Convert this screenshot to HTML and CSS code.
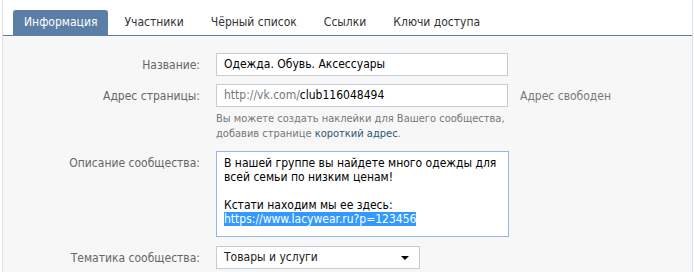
FILE: index.html
```html
<!DOCTYPE html>
<html>
<head>
  <meta charset="UTF-8">
  <title>Управление сообществом</title>
  <link rel="stylesheet" href="styles.css">
</head>
<body>

<div class="page">
  <!-- Вкладки -->
  <div class="tabs">
    <div class="tab active">Информация</div>
    <div class="tab">Участники</div>
    <div class="tab">Чёрный список</div>
    <div class="tab">Ссылки</div>
    <div class="tab">Ключи доступа</div>
  </div>

  <!-- Форма -->
  <div class="form">
    <div class="row">
      <div class="label">Название:</div>
      <div class="field">Одежда. Обувь. Аксессуары</div>
    </div>

    <div class="row">
      <div class="label">Адрес страницы:</div>
      <div class="field"><span class="prefix">http://vk.com/</span>club116048494</div>
      <div class="status">Адрес свободен</div>
    </div>
    <div class="hint">
      Вы можете создать наклейки для Вашего сообщества,<br>
      добавив странице <a href="#">короткий адрес</a>.
    </div>

    <div class="row top">
      <div class="label">Описание сообщества:</div>
      <div class="field area">В нашей группе вы найдете много одежды для
всей семьи по низким ценам!

Кстати находим мы ее здесь:
<span class="selected">https://www.lacywear.ru?p=123456</span></div>
    </div>

    <div class="row">
      <div class="label">Тематика сообщества:</div>
      <div class="field select">
        <span>Товары и услуги</span>
        <span class="arrow"></span>
      </div>
    </div>
  </div>
</div>

</body>
</html>
```

FILE: styles.css
```css
/* --- BASE --- */
* {
  margin: 0;
  padding: 0;
  box-sizing: border-box;
}
html, body {
  height: 100%;
  background: #fff;
  font-family: "DejaVu Sans Condensed", "DejaVu Sans", sans-serif;
  font-size: 12px;
  color: #222;
  overflow: hidden;
}

/* --- CADRE --- */
.page {
  height: 100%;
  margin: 0 1px 0 2px;
  border-left: 1px solid #dde2e8;
  border-right: 1px solid #dde2e8;
  background: #f7f7f7;
}

/* --- TABS --- */
.tabs {
  display: flex;
  gap: 5px;
  padding: 10px 0 0 10px;
  background: #fff;
  border-bottom: 1px solid #5b7ea6;
}
.tab {
  height: 25px;
  line-height: 24px;
  padding: 0 11px;
  color: #333;
  border-radius: 3px 3px 0 0;
}
.tab.active {
  background: #5b7ea6;
  color: #fff;
}

/* --- FORM --- */
.form {
  padding-top: 17px;
}
.row {
  display: flex;
  align-items: center;
  margin-bottom: 8px;
}
.row.top {
  align-items: flex-start;
  margin-top: 10px;
  margin-bottom: 9px;
}
.label {
  width: 197px;
  margin-right: 16px;
  text-align: right;
  color: #666;
}
.row.top .label {
  padding-top: 5px;
}
.field {
  width: 292px;
  height: 23px;
  line-height: 21px;
  padding: 0 7px;
  background: #fff;
  border: 1px solid #c3cdd8;
  color: #000;
  white-space: nowrap;
}
.prefix {
  color: #777;
}
.status {
  margin-left: 12px;
  color: #777;
}

.hint {
  margin: -4px 0 0 213px;
  font-size: 11px;
  line-height: 15px;
  color: #777;
}
.hint a {
  color: #2b587a;
  text-decoration: none;
}

.field.area {
  width: 293px;
  height: 86px;
  padding: 4px 7px;
  line-height: 14px;
  white-space: pre;
  border-color: #97b6e0;
}
.selected {
  background: #3399ff;
  color: #fff;
}

.field.select {
  width: 204px;
  display: flex;
  align-items: center;
  justify-content: space-between;
  color: #222;
}
.arrow {
  width: 0;
  height: 0;
  margin-right: 3px;
  border-left: 4px solid transparent;
  border-right: 4px solid transparent;
  border-top: 4px solid #000;
}
```
